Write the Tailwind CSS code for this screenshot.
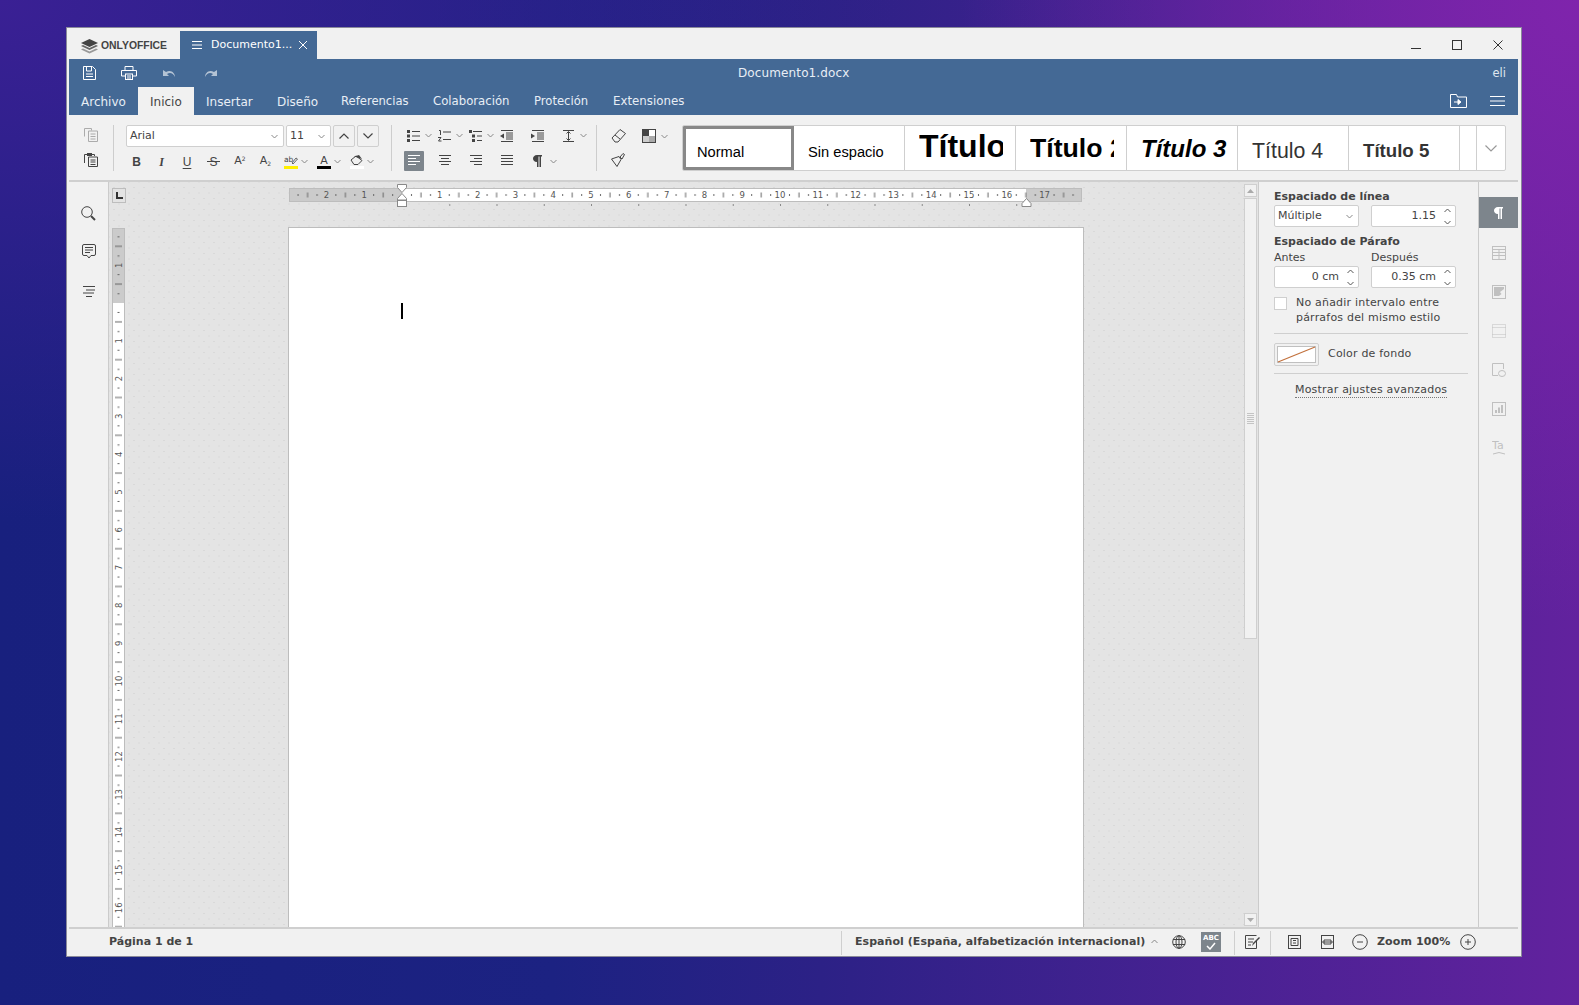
<!DOCTYPE html>
<html lang="es">
<head>
<meta charset="utf-8">
<title>ONLYOFFICE</title>
<script src="https://cdn.jsdelivr.net/npm/@tailwindcss/browser@4"></script>
</head>
<body class="m-0">
<div class="w-[1579px] h-[1005px] overflow-hidden pt-[27px] pl-[66px] font-['DejaVu_Sans',sans-serif] bg-[radial-gradient(900px_520px_at_0%_0%,#3a2094_0%,#3a209400_100%),radial-gradient(620px_620px_at_100%_0%,#7f24ac_0%,#7f24ac00_100%),linear-gradient(90deg,#18207e_0%,#1c2282_35%,#2c2186_52%,#62229e_100%)]">
  <div class="w-[1456px] h-[930px] bg-[#f1f1f1] border border-[#8a8a9a] pl-[2px] pr-[3px] flex flex-col">

    <!-- title bar -->
    <div class="h-[31px] flex items-end shrink-0">
      <div class="w-[111px] h-[28px] flex items-center pl-[12px] gap-[3px]">
        <svg width="17" height="15" viewBox="0 0 17 15" class="mt-[2px]"><path d="M8.500 0L17 4 8.500 8 0 4z" fill="#444"/><path d="M0 7l2-1 6.500 3 6.500-3 2 1-8.500 4z" fill="#666"/><path d="M0 10.500l2-1 6.500 3 6.500-3 2 1-8.500 4z" fill="#999"/></svg>
        <span class="font-['Liberation_Sans'] font-bold text-[10.4px] text-[#444] mt-[2px]">ONLYOFFICE</span>
      </div>
      <div class="w-[137px] h-[28px] bg-[#446995] flex items-center text-white pl-[11px]">
        <svg width="12" height="10" viewBox="0 0 12 10" class="mr-[8px]"><path d="M1 1.500h10M1 5h10M1 8.500h10" stroke="#fff" stroke-width="1"/></svg>
        <span class="text-[11px] w-[87px] whitespace-nowrap">Documento1...</span>
        <svg width="10" height="10" viewBox="0 0 10 10"><path d="M1 1l8 8M9 1l-8 8" stroke="#fff" stroke-width="1"/></svg>
      </div>
      <div class="flex-1"></div>
      <div class="h-[31px] flex items-center pr-[15px] gap-[31px] pt-[2px]">
        <svg width="10" height="10" viewBox="0 0 10 10"><path d="M0 8.500h10" stroke="#333" stroke-width="1"/></svg>
        <svg width="10" height="10" viewBox="0 0 10 10"><rect x=".5" y=".5" width="9" height="9" fill="none" stroke="#333"/></svg>
        <svg width="10" height="10" viewBox="0 0 10 10"><path d="M.5.500l9 9M9.500.500l-9 9" stroke="#333" stroke-width="1"/></svg>
      </div>
    </div>

    <!-- blue header -->
    <div class="h-[56px] bg-[#446995] shrink-0 flex flex-col text-white">
      <div class="h-[28px] flex items-center relative">
        <div class="flex items-center pl-[13px]">
          <div class="w-[15px] h-[14px] flex justify-center">
            <svg width="13" height="14" viewBox="0 0 13 14"><path d="M.5.500h9l3 3v10H.500z" fill="none" stroke="#fff"/><path d="M3.500 1v4h5V1" fill="none" stroke="#fff"/><path d="M3 8h7M3 10.500h7" stroke="#fff"/></svg>
          </div>
          <div class="w-[16px] h-[14px] ml-[24px] flex justify-center">
            <svg width="16" height="14" viewBox="0 0 16 14"><path d="M4 4V.500h8V4M4 10H.500V4.500h15V10H12" fill="none" stroke="#fff"/><rect x="4.500" y="8" width="7" height="5.500" fill="none" stroke="#fff"/><path d="M6 10h4M6 12h4" stroke="#fff"/></svg>
          </div>
          <svg width="15" height="10" viewBox="0 0 15 10" class="ml-[25px] opacity-60"><path d="M1 2v6h6L5 6c3-2 6-1 8 3 0-4-4-8-9-5z" fill="#fff"/></svg>
          <svg width="15" height="10" viewBox="0 0 15 10" class="ml-[26px] opacity-60"><path d="M14 2v6H8l2-2C7 4 4 5 2 9c0-4 4-8 9-5z" fill="#fff"/></svg>
        </div>
        <div class="absolute left-[669px] text-[12px] tracking-[0.12px] text-[#e8eef5]">Documento1.docx</div>
        <div class="ml-auto pr-[12px] pt-[1px] text-[11.500px] text-[#dfe6ee]">eli</div>
      </div>
      <div class="h-[28px] flex items-end text-[12px] text-[#e8eef5]">
        <div class="h-[28px] w-[69px] pl-[12px] pt-[1px] flex items-center">Archivo</div>
        <div class="h-[28px] w-[56px] pl-[12px] pt-[1px] flex items-center text-[#444] bg-[#f1f1f1]">Inicio</div>
        <div class="h-[28px] w-[71px] pl-[12px] pt-[1px] flex items-center">Insertar</div>
        <div class="h-[28px] w-[64px] pl-[12px] pt-[1px] flex items-center">Diseño</div>
        <div class="h-[28px] w-[92px] pl-[12px] pt-[1px] flex items-center text-[11.600px]">Referencias</div>
        <div class="h-[28px] w-[101px] pl-[12px] pt-[1px] flex items-center text-[11.700px]">Colaboración</div>
        <div class="h-[28px] w-[79px] pl-[12px] pt-[1px] flex items-center text-[11.600px]">Proteción</div>
        <div class="h-[28px] pl-[12px] pt-[1px] flex items-center text-[11.800px]">Extensiones</div>
        <div class="ml-auto h-[28px] flex items-center gap-[23px] pr-[13px]">
          <svg width="17" height="14" viewBox="0 0 17 14"><path d="M.5 13.500V.500h6l1 2.500h9v10.500z" fill="none" stroke="#fff"/><path d="M4 8h6M8 5.500L11 8l-3 2.500z" stroke="#fff" fill="#fff"/></svg>
          <svg width="15" height="10" viewBox="0 0 15 10"><path d="M0 .500h15M0 5h15M0 9.500h15" stroke="#fff"/></svg>
        </div>
      </div>
    </div>

    <!-- toolbar -->
    <div class="h-[67px] shrink-0 border-b-2 border-[#cfcfcf] flex pt-[10px]">
      <!-- clipboard -->
      <div class="w-[45px] h-[46px] flex flex-col items-center gap-[10px] border-r border-[#cdcdcd] pt-[3px]">
        <svg width="14" height="14" viewBox="0 0 14 14" class="opacity-40"><path d="M.5 8.500V.500h7v2M4.500 13.500V3h9v10.500zM6.500 6h5M6.500 8.500h5M6.500 11h5" fill="none" stroke="#444"/></svg>
        <svg width="14" height="15" viewBox="0 0 14 15"><path d="M.5 11V2.500h3M8 2.500h2.500V4" fill="none" stroke="#444"/><rect x="3" y="1" width="5" height="3" fill="#444"/><path d="M4.500 14.500V5h9v9.500zM6.500 8h5M6.500 10h5M6.500 12.500h5" fill="none" stroke="#444"/></svg>
      </div>
      <!-- font -->
      <div class="w-[278px] h-[46px] pl-[12px] flex flex-col gap-[5px] border-r border-[#cdcdcd]">
        <div class="flex gap-[2px] h-[22px] text-[11px] text-[#444]">
          <div class="w-[158px] h-[22px] bg-white border border-[#cfcfcf] rounded-[2px] flex items-center pl-[3px] pr-[5px] pt-[1px] justify-between"><span>Arial</span><svg width="7" height="5" viewBox="0 0 7 5"><path d="M.5 1l3 3 3-3" fill="none" stroke="#888"/></svg></div>
          <div class="w-[45px] h-[22px] bg-white border border-[#cfcfcf] rounded-[2px] flex items-center pl-[3px] pr-[5px] pt-[1px] justify-between"><span>11</span><svg width="7" height="5" viewBox="0 0 7 5"><path d="M.5 1l3 3 3-3" fill="none" stroke="#888"/></svg></div>
          <div class="w-[22px] h-[22px] border border-[#cfcfcf] rounded-[2px] flex items-center justify-center"><svg width="10" height="6" viewBox="0 0 10 6"><path d="M.5 5.500L5 1l4.500 4.500" fill="none" stroke="#444" stroke-width="1.200"/></svg></div>
          <div class="w-[22px] h-[22px] border border-[#cfcfcf] rounded-[2px] flex items-center justify-center"><svg width="10" height="6" viewBox="0 0 10 6"><path d="M.5.500L5 5l4.500-4.500" fill="none" stroke="#444" stroke-width="1.200"/></svg></div>
        </div>
        <div class="flex items-center h-[19px] -ml-[2px] text-[#444]">
          <div class="w-[25px] text-center font-bold text-[12px] font-['Liberation_Sans']">B</div>
          <div class="w-[25px] text-center italic text-[12px] font-['Liberation_Serif'] font-semibold">I</div>
          <div class="w-[26px] text-center text-[12px] underline underline-offset-2 font-['Liberation_Sans']">U</div>
          <div class="w-[27px] text-center text-[12px] relative font-['Liberation_Sans']">S<div class="absolute left-[7px] top-[8px] w-[13px] h-[1px] bg-[#444]"></div></div>
          <div class="w-[26px] text-center text-[11px]">A<sup class="text-[6px]">2</sup></div>
          <div class="w-[25px] text-center text-[11px]">A<sub class="text-[6px]">2</sub></div>
          <div class="w-[33px] flex items-center gap-[3px] pl-[6px]">
            <svg width="14" height="14" viewBox="0 0 14 14"><text x="0" y="7" font-size="7.500" fill="#444">ab</text><path d="M8 8l4-5 1.500 1L9 9z" fill="none" stroke="#444" stroke-width=".8"/><rect y="11" width="14" height="3" fill="#ffef00"/></svg>
            <svg width="7" height="5" viewBox="0 0 7 5"><path d="M.5 1l3 3 3-3" fill="none" stroke="#888"/></svg>
          </div>
          <div class="w-[33px] flex items-center gap-[3px] pl-[6px]">
            <svg width="14" height="15" viewBox="0 0 14 15"><text x="7" y="10" font-size="11" text-anchor="middle" fill="#444">A</text><rect y="12" width="14" height="3" fill="#000"/></svg>
            <svg width="7" height="5" viewBox="0 0 7 5"><path d="M.5 1l3 3 3-3" fill="none" stroke="#888"/></svg>
          </div>
          <div class="w-[33px] flex items-center gap-[3px] pl-[6px]">
            <svg width="14" height="15" viewBox="0 0 14 15"><path d="M1 6l5-4 6 4.500-4 4H4z" fill="none" stroke="#444"/><path d="M4 2.500L9 1l3 4" fill="#444"/><rect y="12" width="14" height="3" fill="#fff"/></svg>
            <svg width="7" height="5" viewBox="0 0 7 5"><path d="M.5 1l3 3 3-3" fill="none" stroke="#888"/></svg>
          </div>
        </div>
      </div>
      <!-- paragraph -->
      <div class="w-[205px] h-[46px] pl-[7px] flex flex-col gap-[6px] border-r border-[#cdcdcd] text-[#444] pt-[1px]">
        <div class="flex h-[20px] items-center">
          <div class="w-[31px] flex items-center gap-[5px] pl-[8px]"><svg width="13" height="12" viewBox="0 0 13 12" class="shrink-0"><path d="M5 1.500h8M5 6h8M5 10.500h8" stroke="#444"/><rect width="3" height="3" fill="#444"/><rect y="4.500" width="3" height="3" fill="#444"/><rect y="9" width="3" height="3" fill="#444"/></svg><svg width="7" height="5" viewBox="0 0 7 5" class="shrink-0"><path d="M.5 1l3 3 3-3" fill="none" stroke="#888"/></svg></div>
          <div class="w-[31px] flex items-center gap-[5px] pl-[8px]"><svg width="13" height="12" viewBox="0 0 13 12" class="shrink-0"><path d="M5 2h8M5 9.500h8" stroke="#444"/><path d="M1 .500h1.500V5M0 7.500h3L.500 11h3" fill="none" stroke="#444"/></svg><svg width="7" height="5" viewBox="0 0 7 5" class="shrink-0"><path d="M.5 1l3 3 3-3" fill="none" stroke="#888"/></svg></div>
          <div class="w-[31px] flex items-center gap-[5px] pl-[8px]"><svg width="13" height="12" viewBox="0 0 13 12" class="shrink-0"><path d="M4 1.500h9M8 6h5M8 10.500h5" stroke="#444"/><rect width="3" height="3" fill="#444"/><rect x="3" y="4.500" width="3" height="3" fill="#444"/><rect x="3" y="9" width="3" height="3" fill="#444"/></svg><svg width="7" height="5" viewBox="0 0 7 5" class="shrink-0"><path d="M.5 1l3 3 3-3" fill="none" stroke="#888"/></svg></div>
          <div class="w-[31px] pl-[8px]"><svg width="13" height="12" viewBox="0 0 13 12"><path d="M1 .500h12M6 3h7M6 5h7M6 7h7M6 9h7M1 11.500h12" stroke="#444" fill="none"/><path d="M4 3.500v5L0 6z" fill="#444"/></svg></div>
          <div class="w-[31px] pl-[8px]"><svg width="13" height="12" viewBox="0 0 13 12"><path d="M1 .500h12M6 3h7M6 5h7M6 7h7M6 9h7M1 11.500h12" stroke="#444" fill="none"/><path d="M0 3.500v5L4 6z" fill="#444"/></svg></div>
          <div class="w-[31px] flex items-center gap-[5px] pl-[8px]"><svg width="13" height="12" viewBox="0 0 13 12" class="shrink-0"><path d="M1 .500h11M1 11.500h11M6.500 2v8" stroke="#444"/><path d="M4.500 3.500l2-2 2 2M4.500 8.500l2 2 2-2" stroke="#444" fill="none"/></svg><svg width="7" height="5" viewBox="0 0 7 5" class="shrink-0"><path d="M.5 1l3 3 3-3" fill="none" stroke="#888"/></svg></div>
        </div>
        <div class="flex h-[20px] items-center">
          <div class="w-[31px] pl-[5px]"><div class="w-[20px] h-[20px] rounded-[1px] bg-[#7d858c] flex items-center justify-center"><svg width="12" height="12" viewBox="0 0 12 12"><path d="M0 .500h12M0 3.500h8M0 6.500h12M0 9.500h8" stroke="#fff"/></svg></div></div>
          <div class="w-[31px] pl-[9px]"><svg width="12" height="12" viewBox="0 0 12 12"><path d="M0 .500h12M2 3.500h8M0 6.500h12M2 9.500h8" stroke="#444"/></svg></div>
          <div class="w-[31px] pl-[9px]"><svg width="12" height="12" viewBox="0 0 12 12"><path d="M0 .500h12M4 3.500h8M0 6.500h12M4 9.500h8" stroke="#444"/></svg></div>
          <div class="w-[31px] pl-[9px]"><svg width="12" height="12" viewBox="0 0 12 12"><path d="M0 .500h12M0 3.500h12M0 6.500h12M0 9.500h12" stroke="#444"/></svg></div>
          <div class="w-[31px] flex items-center gap-[8px] pl-[10px]"><svg width="9" height="12" viewBox="0 0 9 12" class="shrink-0"><path d="M4 0h5v1.500H8V12H6.500V1.500h-1V12H4V7C1 7 0 5 0 3.500S1.500 0 4 0z" fill="#444"/></svg><svg width="7" height="5" viewBox="0 0 7 5" class="shrink-0"><path d="M.5 1l3 3 3-3" fill="none" stroke="#888"/></svg></div>
        </div>
      </div>
      <!-- clean -->
      <div class="w-[85px] h-[46px] flex flex-col pl-[14px] gap-[10px] pt-[4px]">
        <div class="flex items-center h-[14px]">
          <svg width="15" height="14" viewBox="0 0 15 14"><path d="M1 9l8-8.500 5.500 4L7 13H4z" fill="none" stroke="#444"/><path d="M4 6l5 4" stroke="#444"/></svg>
          <svg width="14" height="14" viewBox="0 0 14 14" class="ml-[16px]"><rect width="14" height="14" fill="#444"/><rect x="7" y="1" width="6" height="6" fill="#fff"/><rect x="1" y="7" width="6" height="6" fill="#ccc"/><rect x="7" y="7" width="6" height="6" fill="#aaa"/></svg>
          <svg width="7" height="5" viewBox="0 0 7 5" class="ml-[5px]"><path d="M.5 1l3 3 3-3" fill="none" stroke="#888"/></svg>
        </div>
        <svg width="15" height="14" viewBox="0 0 15 14"><path d="M.5 6L8 3.500l2 3-4 7zM9 4l3-3.500 1.500 1L11 6z" fill="none" stroke="#444"/></svg>
      </div>
      <!-- styles gallery -->
      <div class="h-[46px] flex bg-white border border-[#cfcfcf] rounded-[2px] font-['Liberation_Sans'] text-[#000] w-[824px] overflow-hidden">
        <div class="w-[111px] shrink-0 border-[3px] border-[#888] pl-[11px] pr-[9px] flex items-end pb-[4px] text-[14.670px] h-[44px]"><span class="whitespace-nowrap">Normal</span></div>
        <div class="w-[111px] shrink-0 border-r border-[#cfcfcf] pl-[14px] pr-[12px] flex items-end pb-[7px] text-[14.670px]"><span class="whitespace-nowrap">Sin espacio</span></div>
        <div class="w-[111px] shrink-0 border-r border-[#cfcfcf] pl-[14px] pr-[12px] flex items-end pb-[6px] text-[32px] font-bold leading-[36px]"><span class="w-[84px] whitespace-nowrap overflow-hidden">Título 1</span></div>
        <div class="w-[111px] shrink-0 border-r border-[#cfcfcf] pl-[14px] pr-[12px] flex items-end pb-[7px] text-[26.670px] font-bold leading-[30px]"><span class="w-[84px] whitespace-nowrap overflow-hidden">Título 2</span></div>
        <div class="w-[111px] shrink-0 border-r border-[#cfcfcf] pl-[14px] pr-[9px] flex items-end pb-[7px] text-[24px] font-bold italic leading-[28px]"><span class="whitespace-nowrap">Título 3</span></div>
        <div class="w-[111px] shrink-0 border-r border-[#cfcfcf] pl-[14px] pr-[9px] flex items-end pb-[6px] text-[21.330px] text-[#333] leading-[26px]"><span class="whitespace-nowrap">Título 4</span></div>
        <div class="w-[111px] shrink-0 border-r border-[#cfcfcf] pl-[14px] pr-[9px] flex items-end pb-[7px] text-[18.670px] font-bold text-[#333] leading-[24px]"><span class="whitespace-nowrap">Título 5</span></div>
        <div class="w-[17px] shrink-0 border-r border-[#cfcfcf]"></div>
        <div class="flex-1 flex items-center justify-center"><svg width="12" height="7" viewBox="0 0 12 7"><path d="M.5.500L6 6l5.500-5.500" fill="none" stroke="#999" stroke-width="1.200"/></svg></div>
      </div>
    </div>

    <!-- main -->
    <div class="flex-1 flex min-h-0">
      <!-- left tools -->
      <div class="w-[40px] shrink-0 border-r border-[#cbcbcb] flex flex-col items-center pt-[24px] gap-[23px]">
        <svg width="15" height="15" viewBox="0 0 15 15"><circle cx="6" cy="6" r="5.300" fill="none" stroke="#444"/><path d="M10 10l4 4" stroke="#444" stroke-width="2"/></svg>
        <svg width="14" height="15" viewBox="0 0 14 15"><path d="M2 .500h10q1.500 0 1.500 1.500v8q0 1.500-1.500 1.500H9L7 14l-2-2.500H2Q.5 11.500.5 10V2Q.5.500 2 .500z" fill="none" stroke="#444"/><path d="M3 3.500h8M3 6h8M3 8.500h5" stroke="#444"/></svg>
        <svg width="14" height="11" viewBox="0 0 14 11" class="mt-[4px]"><path d="M1 .500h12M4 4h9M1 7h11M4 10.500h6" stroke="#444"/></svg>
      </div>

      <!-- document area -->
      <div class="flex-1 flex min-w-0 overflow-hidden bg-[#e4e4e4] bg-[radial-gradient(#d9d9d9_0.7px,transparent_0.8px),radial-gradient(#d9d9d9_0.7px,transparent_0.8px)] bg-[length:10px_11px] bg-[position:0_0,5px_5.500px]">
        <!-- vertical ruler column -->
        <div class="w-[16px] shrink-0 pl-[3px] pt-[6px]">
          <div class="w-[14px] h-[15px] bg-[#e3e3e3] border border-[#bdbdbd] flex items-center justify-center"><svg width="7" height="7" viewBox="0 0 7 7"><path d="M0 0h2v5h5v2H0z" fill="#333"/></svg></div>
          <svg width="13" height="702" viewBox="0 0 13 702" class="mt-[25px] font-['DejaVu_Sans'] block">
            <defs>
              <pattern id="vt" x="0" y="75" width="13" height="37.800" patternUnits="userSpaceOnUse">
                <path d="M5.500 9h2v1h-2zM3 18.500h7v1H3zM5.500 28h2v1h-2z" fill="#666"/>
              </pattern>
            </defs>
            <rect width="13" height="75" fill="#cbcbcb"/>
            <rect y="75" width="13" height="627" fill="#fff"/>
            <rect width="13" height="702" fill="url(#vt)"/>
            <rect x=".5" y=".5" width="12" height="701" fill="none" stroke="#bdbdbd"/>
            <g fill="#555" font-size="8.500" text-anchor="middle">
              <text transform="translate(9.500 37.200) rotate(-90)">1</text>
              <text transform="translate(9.500 112.800) rotate(-90)">1</text>
              <text transform="translate(9.500 150.600) rotate(-90)">2</text>
              <text transform="translate(9.500 188.400) rotate(-90)">3</text>
              <text transform="translate(9.500 226.200) rotate(-90)">4</text>
              <text transform="translate(9.500 264) rotate(-90)">5</text>
              <text transform="translate(9.500 301.800) rotate(-90)">6</text>
              <text transform="translate(9.500 339.600) rotate(-90)">7</text>
              <text transform="translate(9.500 377.400) rotate(-90)">8</text>
              <text transform="translate(9.500 415.200) rotate(-90)">9</text>
              <text transform="translate(9.500 453) rotate(-90)">10</text>
              <text transform="translate(9.500 490.800) rotate(-90)">11</text>
              <text transform="translate(9.500 528.600) rotate(-90)">12</text>
              <text transform="translate(9.500 566.400) rotate(-90)">13</text>
              <text transform="translate(9.500 604.200) rotate(-90)">14</text>
              <text transform="translate(9.500 642) rotate(-90)">15</text>
              <text transform="translate(9.500 679.800) rotate(-90)">16</text>
            </g>
          </svg>
        </div>
        <!-- page column -->
        <div class="w-[1119px] shrink-0 pl-[163px] pt-[6px]">
          <svg width="794" height="14" viewBox="0 0 794 14" class="overflow-visible font-['DejaVu_Sans'] block ml-[1px]">
            <defs>
              <pattern id="ht" x="113" y="0" width="37.800" height="14" patternUnits="userSpaceOnUse">
                <path d="M9 6h1v2H9zM18.500 4.500h1v5h-1zM28 6h1v2h-1z" fill="#666"/>
              </pattern>
              <pattern id="ds" x="113" y="0" width="47.250" height="5" patternUnits="userSpaceOnUse">
                <path d="M0 0h1v3H0z" fill="#888"/>
              </pattern>
            </defs>
            <rect width="793" height="14" fill="#fff"/>
            <rect width="113" height="14" fill="#cbcbcb"/>
            <rect x="737" width="56" height="14" fill="#cbcbcb"/>
            <rect width="793" height="14" fill="url(#ht)"/>
            <rect x=".5" y=".5" width="792" height="13" fill="none" stroke="#bdbdbd"/>
            <rect x="160.200" y="16" width="578" height="3" fill="url(#ds)"/>
            <g fill="#555" font-size="8.500" text-anchor="middle">
              <text x="37.400" y="10">2</text><text x="75.200" y="10">1</text>
              <text x="150.800" y="10">1</text><text x="188.600" y="10">2</text><text x="226.400" y="10">3</text><text x="264.200" y="10">4</text><text x="302" y="10">5</text><text x="339.800" y="10">6</text><text x="377.600" y="10">7</text><text x="415.400" y="10">8</text><text x="453.200" y="10">9</text><text x="491" y="10">10</text><text x="528.800" y="10">11</text><text x="566.600" y="10">12</text><text x="604.400" y="10">13</text><text x="642.200" y="10">14</text><text x="680" y="10">15</text><text x="717.800" y="10">16</text><text x="755.600" y="10">17</text>
            </g>
            <path d="M108.500-3.500h9v3l-4.500 5-4.500-5zM113 5.500l4.500 5v1.500h-9v-1.500z" fill="#fff" stroke="#888"/>
            <rect x="108.500" y="12.500" width="9" height="6" fill="#fff" stroke="#888"/>
            <path d="M733 18.500v-3l4.500-5 4.500 5v3z" fill="#fff" stroke="#888"/>
          </svg>
          <div class="w-[796px] h-[800px] mt-[25px] bg-white border-t border-l border-r border-[#bdbdbd] pl-[112px] pt-[75px]">
            <div class="w-[2px] h-[16px] bg-black"></div>
          </div>
        </div>
      </div>

      <!-- scrollbar -->
      <div class="w-[14px] shrink-0 bg-[#e4e4e4] flex flex-col pt-[2px] pb-[1px]">
        <div class="h-[13px] w-[13px] bg-[#f1f1f1] border border-[#cfcfcf] flex items-center justify-center"><svg width="7" height="4" viewBox="0 0 7 4"><path d="M0 4l3.500-4L7 4z" fill="#aaa"/></svg></div>
        <div class="h-[441px] w-[13px] mt-[1px] bg-[#f1f1f1] border border-[#cfcfcf] flex flex-col items-center justify-center gap-[1px]">
          <div class="w-[7px] h-[1px] bg-[#c4c4c4]"></div><div class="w-[7px] h-[1px] bg-[#c4c4c4]"></div><div class="w-[7px] h-[1px] bg-[#c4c4c4]"></div><div class="w-[7px] h-[1px] bg-[#c4c4c4]"></div><div class="w-[7px] h-[1px] bg-[#c4c4c4]"></div><div class="w-[7px] h-[1px] bg-[#c4c4c4]"></div>
        </div>
        <div class="flex-1"></div>
        <div class="h-[13px] w-[13px] bg-[#f1f1f1] border border-[#cfcfcf] flex items-center justify-center"><svg width="7" height="4" viewBox="0 0 7 4"><path d="M0 0l3.500 4L7 0z" fill="#aaa"/></svg></div>
      </div>

      <!-- right settings panel -->
      <div class="w-[220px] shrink-0 border-l border-[#cbcbcb] pl-[15px] pr-[10px] pt-[8px] text-[11px] text-[#444]">
        <div class="font-bold leading-[14px]">Espaciado de línea</div>
        <div class="flex gap-[12px] mt-[1px]">
          <div class="w-[85px] h-[22px] bg-white border border-[#cfcfcf] rounded-[2px] flex items-center pl-[3px] pr-[5px] justify-between"><span>Múltiple</span><svg width="7" height="5" viewBox="0 0 7 5"><path d="M.5 1l3 3 3-3" fill="none" stroke="#888"/></svg></div>
          <div class="w-[85px] h-[22px] bg-white border border-[#cfcfcf] rounded-[2px] flex items-center justify-end pr-[4px] gap-[8px]"><span>1.15</span><svg width="7" height="17" viewBox="0 0 7 17"><path d="M.5 4l3-3 3 3M.5 13l3 3 3-3" fill="none" stroke="#555"/></svg></div>
        </div>
        <div class="font-bold leading-[14px] mt-[8px]">Espaciado de Párafo</div>
        <div class="flex gap-[12px] mt-[2px] leading-[14px]"><div class="w-[85px]">Antes</div><div class="w-[85px]">Después</div></div>
        <div class="flex gap-[12px] mt-[1px]">
          <div class="w-[85px] h-[22px] bg-white border border-[#cfcfcf] rounded-[2px] flex items-center justify-end pr-[4px] gap-[8px]"><span>0 cm</span><svg width="7" height="17" viewBox="0 0 7 17"><path d="M.5 4l3-3 3 3M.5 13l3 3 3-3" fill="none" stroke="#555"/></svg></div>
          <div class="w-[85px] h-[22px] bg-white border border-[#cfcfcf] rounded-[2px] flex items-center justify-end pr-[4px] gap-[8px]"><span>0.35 cm</span><svg width="7" height="17" viewBox="0 0 7 17"><path d="M.5 4l3-3 3 3M.5 13l3 3 3-3" fill="none" stroke="#555"/></svg></div>
        </div>
        <div class="flex mt-[7px] gap-[9px]">
          <div class="w-[13px] h-[13px] bg-white border border-[#cfcfcf] shrink-0 mt-[2px]"></div>
          <div class="leading-[15px] tracking-[0.2px] whitespace-nowrap">No añadir intervalo entre<br>párrafos del mismo estilo</div>
        </div>
        <div class="h-[1px] bg-[#cfcfcf] mt-[8px] w-[194px]"></div>
        <div class="flex items-center mt-[9px] gap-[9px]">
          <div class="w-[45px] h-[23px] border border-[#cfcfcf] rounded-[2px] bg-[#f1f1f1] flex items-center justify-center">
            <svg width="39" height="17" viewBox="0 0 39 17"><rect x=".5" y=".5" width="38" height="16" fill="#fff" stroke="#c0c0c0"/><path d="M1 16L38 1" stroke="#c2713d" stroke-width="1.200"/></svg>
          </div>
          <span class="tracking-[0.2px]">Color de fondo</span>
        </div>
        <div class="h-[1px] bg-[#cfcfcf] mt-[7px] w-[194px]"></div>
        <div class="mt-[8px] ml-[21px] w-fit leading-[15px] border-b border-dotted border-[#777] whitespace-nowrap tracking-[0.2px]">Mostrar ajustes avanzados</div>
      </div>

      <!-- right tabs -->
      <div class="w-[40px] shrink-0 border-l border-[#cbcbcb] pt-[15px] flex flex-col">
        <div class="h-[31px] bg-[#7d858c] flex items-center justify-center"><svg width="9" height="12" viewBox="0 0 9 12"><path d="M4 0h5v1.500H8V12H6.500V1.500h-1V12H4V7C1 7 0 5 0 3.500S1.500 0 4 0z" fill="#fff"/></svg></div>
        <div class="h-[39px] mt-[5px] flex items-center justify-center opacity-35"><svg width="14" height="14" viewBox="0 0 14 14"><rect x=".5" y=".5" width="13" height="13" fill="none" stroke="#666"/><path d="M.5 3.500h13M.5 6.500h13M.5 9.500h13M7 3.500v10" stroke="#666"/></svg></div>
        <div class="h-[39px] flex items-center justify-center opacity-35"><svg width="14" height="14" viewBox="0 0 14 14"><rect x=".5" y=".5" width="13" height="13" fill="none" stroke="#666"/><path d="M2 11V2h10v2L8 7l1.500 2L7 11z" fill="#666"/></svg></div>
        <div class="h-[39px] flex items-center justify-center opacity-35"><svg width="14" height="14" viewBox="0 0 14 14"><rect x=".5" y=".5" width="13" height="13" fill="none" stroke="#666" stroke-dasharray="1 1"/><path d="M.5 3.500h13M.5 10.500h13" stroke="#666" stroke-dasharray="1 1"/></svg></div>
        <div class="h-[39px] flex items-center justify-center opacity-35"><svg width="14" height="14" viewBox="0 0 14 14"><path d="M6 12.500H.5V.500h11V6" fill="none" stroke="#666"/><ellipse cx="10" cy="10.500" rx="3.500" ry="3" fill="none" stroke="#666"/></svg></div>
        <div class="h-[39px] flex items-center justify-center opacity-35"><svg width="14" height="14" viewBox="0 0 14 14"><rect x=".5" y=".5" width="13" height="13" fill="none" stroke="#666"/><path d="M3 8h2v3H3zM6 5.500h2V11H6zM9 3h2v8H9z" fill="#666"/></svg></div>
        <div class="h-[39px] flex items-center justify-center opacity-35 text-[#555]"><svg width="14" height="15" viewBox="0 0 14 15"><text x="0" y="9" font-size="11" fill="#666">Ta</text><path d="M1 14q6-3 12 0" fill="none" stroke="#666"/></svg></div>
      </div>
    </div>

    <!-- status bar -->
    <div class="h-[29px] shrink-0 border-t-2 border-[#cfcfcf] flex items-center text-[11px] text-[#444] font-bold">
      <div class="w-[772px] pl-[40px]">Página 1 de 1</div>
      <div class="h-[24px] border-l border-[#cfcfcf] flex items-center pl-[13px] w-[393px]">
        <span class="whitespace-nowrap w-[290px] tracking-[0.05px]">Español (España, alfabetización internacional)</span>
        <svg width="7" height="5" viewBox="0 0 7 5" class="ml-[6px] -mt-[2px]"><path d="M.5 4l3-3 3 3" fill="none" stroke="#888"/></svg>
        <svg width="14" height="14" viewBox="0 0 14 14" class="ml-[14px] -mt-[1px]"><circle cx="7" cy="7" r="6.300" fill="none" stroke="#444"/><ellipse cx="7" cy="7" rx="3" ry="6.300" fill="none" stroke="#444"/><path d="M1 4.500h12M1 9.500h12M7 .500v13" stroke="#444"/></svg>
        <div class="w-[20px] h-[20px] ml-[15px] -mt-[1px] bg-[#7d858c] flex flex-col items-center justify-center"><span class="text-[7px] font-bold text-white leading-[8px]">ABC</span><svg width="10" height="8" viewBox="0 0 10 8"><path d="M1 4l3 3 5-6" fill="none" stroke="#fff" stroke-width="1.500"/></svg></div>
      </div>
      <div class="h-[24px] border-l border-[#cfcfcf] w-[36px] flex items-center justify-center">
        <svg width="15" height="14" viewBox="0 0 15 14" class="-mt-[2px]"><path d="M11.500 6v7.500h-11V.500h11M3 4h6M3 7h5M3 10h3" fill="none" stroke="#444"/><path d="M7 11l1-3 6-6 1 1-6 6z" fill="#444"/></svg>
      </div>
      <div class="h-[24px] border-l border-[#cfcfcf] flex items-center pl-[17px] text-[11px]">
        <svg width="13" height="14" viewBox="0 0 13 14" class="-mt-[2px]"><rect x=".5" y=".5" width="12" height="13" fill="none" stroke="#444"/><path d="M3 3.500h7v7H3zM5 5.500h3M5 8h3" fill="none" stroke="#444"/></svg>
        <svg width="13" height="14" viewBox="0 0 13 14" class="ml-[20px] -mt-[2px]"><rect x=".5" y=".5" width="12" height="13" fill="none" stroke="#444"/><path d="M3 5h7v4H3zM1 7h11" fill="none" stroke="#444"/></svg>
        <svg width="16" height="16" viewBox="0 0 16 16" class="ml-[18px] -mt-[2px]"><circle cx="8" cy="8" r="7.300" fill="none" stroke="#444"/><path d="M5 8h6" stroke="#444"/></svg>
        <span class="ml-[9px] whitespace-nowrap tracking-[0.1px]">Zoom 100%</span>
        <svg width="16" height="16" viewBox="0 0 16 16" class="ml-[10px] -mt-[2px]"><circle cx="8" cy="8" r="7.300" fill="none" stroke="#444"/><path d="M5 8h6M8 5v6" stroke="#444"/></svg>
      </div>
    </div>
  </div>
</div>
</body>
</html>
